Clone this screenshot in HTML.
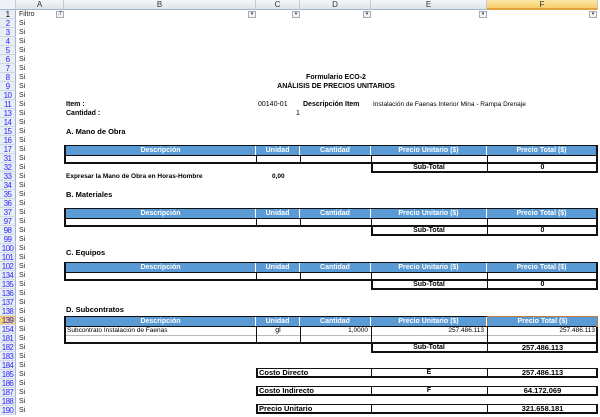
<!DOCTYPE html>
<html><head><meta charset="utf-8"><style>
*{margin:0;padding:0;box-sizing:border-box}
body{width:600px;height:417px;overflow:hidden;background:#fff;font-family:"Liberation Sans",Arial,sans-serif;font-size:7px;position:relative;color:#000}
div{position:absolute;white-space:nowrap}
.ch{top:0;height:10px;background:linear-gradient(#f4f6f9,#dfe4ea);border-right:1px solid #c5cbd3;border-bottom:1px solid #9eb6ce;text-align:center;font-size:8px;line-height:10px;color:#333}
.rn{left:0;width:16px;height:9px;background:#e9eef5;border-right:1px solid #9eb6ce;border-bottom:1px solid #d0d7e2;color:#2b2bff;font-size:8px;line-height:9px;text-align:center;letter-spacing:-0.6px}
.si{left:19px;height:9px;line-height:9px;font-size:7px;color:#222}
.b{font-weight:bold}
.hd{height:10px;background:#5b9bd5;color:#fff;font-weight:bold;text-align:center;line-height:10px;border-right:1px solid #fff}
.dd{width:8px;height:7px;top:11px;border:1px solid #aab;background:#f4f4f4;font-size:5px;line-height:5px;text-align:center;color:#333}
.bx{border:2px solid #111;border-top-width:1px;height:10px}
</style></head><body>
<div class="ch" style="left:0;width:16px;background:#eef1f5"></div>
<div class="ch" style="left:16px;width:48px">A</div>
<div class="ch" style="left:64px;width:192px">B</div>
<div class="ch" style="left:256px;width:44px">C</div>
<div class="ch" style="left:300px;width:71px">D</div>
<div class="ch" style="left:371px;width:116px">E</div>
<div class="ch" style="left:487px;width:111px;background:linear-gradient(#fbe6a6,#f6cf6a);border-bottom:2px solid #e2a13a">F</div>
<div class="dd" style="left:56px">.T</div>
<div class="dd" style="left:248px">▾</div>
<div class="dd" style="left:292px">▾</div>
<div class="dd" style="left:363px">▾</div>
<div class="dd" style="left:479px">▾</div>
<div class="dd" style="left:589px">▾</div>

<div class="rn" style="top:10px;color:#000">1</div><div class="si" style="top:10px">Filtro</div>
<div class="rn" style="top:19px">2</div><div class="si" style="top:19px">Si</div>
<div class="rn" style="top:28px">3</div><div class="si" style="top:28px">Si</div>
<div class="rn" style="top:37px">4</div><div class="si" style="top:37px">Si</div>
<div class="rn" style="top:46px">5</div><div class="si" style="top:46px">Si</div>
<div class="rn" style="top:55px">6</div><div class="si" style="top:55px">Si</div>
<div class="rn" style="top:64px">7</div><div class="si" style="top:64px">Si</div>
<div class="rn" style="top:73px">8</div><div class="si" style="top:73px">Si</div>
<div class="rn" style="top:82px">9</div><div class="si" style="top:82px">Si</div>
<div class="rn" style="top:91px">10</div><div class="si" style="top:91px">Si</div>
<div class="rn" style="top:100px">11</div><div class="si" style="top:100px">Si</div>
<div class="rn" style="top:109px">13</div><div class="si" style="top:109px">Si</div>
<div class="rn" style="top:118px">14</div><div class="si" style="top:118px">Si</div>
<div class="rn" style="top:127px">15</div><div class="si" style="top:127px">Si</div>
<div class="rn" style="top:136px">16</div><div class="si" style="top:136px">Si</div>
<div class="rn" style="top:145px">17</div><div class="si" style="top:145px">Si</div>
<div class="rn" style="top:154px">31</div><div class="si" style="top:154px">Si</div>
<div class="rn" style="top:163px">32</div><div class="si" style="top:163px">Si</div>
<div class="rn" style="top:172px">33</div><div class="si" style="top:172px">Si</div>
<div class="rn" style="top:181px">34</div><div class="si" style="top:181px">Si</div>
<div class="rn" style="top:190px">35</div><div class="si" style="top:190px">Si</div>
<div class="rn" style="top:199px">36</div><div class="si" style="top:199px">Si</div>
<div class="rn" style="top:208px">37</div><div class="si" style="top:208px">Si</div>
<div class="rn" style="top:217px">97</div><div class="si" style="top:217px">Si</div>
<div class="rn" style="top:226px">98</div><div class="si" style="top:226px">Si</div>
<div class="rn" style="top:235px">99</div><div class="si" style="top:235px">Si</div>
<div class="rn" style="top:244px">100</div><div class="si" style="top:244px">Si</div>
<div class="rn" style="top:253px">101</div><div class="si" style="top:253px">Si</div>
<div class="rn" style="top:262px">102</div><div class="si" style="top:262px">Si</div>
<div class="rn" style="top:271px">134</div><div class="si" style="top:271px">Si</div>
<div class="rn" style="top:280px">135</div><div class="si" style="top:280px">Si</div>
<div class="rn" style="top:289px">136</div><div class="si" style="top:289px">Si</div>
<div class="rn" style="top:298px">137</div><div class="si" style="top:298px">Si</div>
<div class="rn" style="top:307px">138</div><div class="si" style="top:307px">Si</div>
<div class="rn" style="top:316px;background:#f6cf6a;color:#2b2bff">139</div><div class="si" style="top:316px">Si</div>
<div class="rn" style="top:325px">154</div><div class="si" style="top:325px">Si</div>
<div class="rn" style="top:334px">181</div><div class="si" style="top:334px">Si</div>
<div class="rn" style="top:343px">182</div><div class="si" style="top:343px">Si</div>
<div class="rn" style="top:352px">183</div><div class="si" style="top:352px">Si</div>
<div class="rn" style="top:361px">184</div><div class="si" style="top:361px">Si</div>
<div class="rn" style="top:370px">185</div><div class="si" style="top:370px">Si</div>
<div class="rn" style="top:379px">186</div><div class="si" style="top:379px">Si</div>
<div class="rn" style="top:388px">187</div><div class="si" style="top:388px">Si</div>
<div class="rn" style="top:397px">188</div><div class="si" style="top:397px">Si</div>
<div class="rn" style="top:406px">190</div><div class="si" style="top:406px">Si</div>

<div class="b" style="left:256px;width:160px;top:73px;text-align:center;line-height:9px">Formulario ECO-2</div>
<div class="b" style="left:236px;width:200px;top:82px;text-align:center;line-height:9px">ANÁLISIS DE PRECIOS UNITARIOS</div>
<div class="b" style="left:66px;top:100px;line-height:9px">Item :</div>
<div style="left:258px;top:100px;line-height:9px">00140-01</div>
<div class="b" style="left:303px;top:100px;line-height:9px">Descripción Item</div>
<div style="left:373px;top:100px;line-height:9px;font-size:6.5px">Instalación de Faenas Interior Mina - Rampa Drenaje</div>
<div class="b" style="left:66px;top:109px;line-height:9px">Cantidad :</div>
<div style="left:296px;top:109px;line-height:9px">1</div>
<div class="b" style="left:66px;top:127px;line-height:9px;font-size:7.5px">A. Mano de Obra</div>
<div class="b" style="left:66px;top:172px;line-height:9px;font-size:6.5px">Expresar la Mano de Obra en Horas-Hombre</div>
<div class="b" style="left:272px;top:172px;line-height:9px;font-size:6.5px">0,00</div>
<div class="b" style="left:66px;top:190px;line-height:9px;font-size:7.5px">B. Materiales</div>
<div class="b" style="left:66px;top:248px;line-height:9px;font-size:7.5px">C. Equipos</div>
<div class="b" style="left:66px;top:305px;line-height:9px;font-size:7.5px">D. Subcontratos</div>

<div style="left:64px;top:145px;width:534px;height:19px;border:2px solid #111"></div>
<div style="left:64px;top:208px;width:534px;height:19px;border:2px solid #111"></div>
<div style="left:64px;top:262px;width:534px;height:19px;border:2px solid #111"></div>
<div style="left:64px;top:316px;width:534px;height:28px;border:2px solid #111"></div>

<div class="hd" style="left:66px;top:146px;width:190px">Descripción</div><div class="hd" style="left:256px;top:146px;width:44px">Unidad</div><div class="hd" style="left:300px;top:146px;width:71px">Cantidad</div><div class="hd" style="left:371px;top:146px;width:116px">Precio Unitario ($)</div><div class="hd" style="left:487px;top:146px;width:109px;border:0">Precio Total ($)</div>
<div class="hd" style="left:66px;top:209px;width:190px">Descripción</div><div class="hd" style="left:256px;top:209px;width:44px">Unidad</div><div class="hd" style="left:300px;top:209px;width:71px">Cantidad</div><div class="hd" style="left:371px;top:209px;width:116px">Precio Unitario ($)</div><div class="hd" style="left:487px;top:209px;width:109px;border:0">Precio Total ($)</div>
<div class="hd" style="left:66px;top:263px;width:190px">Descripción</div><div class="hd" style="left:256px;top:263px;width:44px">Unidad</div><div class="hd" style="left:300px;top:263px;width:71px">Cantidad</div><div class="hd" style="left:371px;top:263px;width:116px">Precio Unitario ($)</div><div class="hd" style="left:487px;top:263px;width:109px;border:0">Precio Total ($)</div>
<div class="hd" style="left:66px;top:317px;width:190px">Descripción</div><div class="hd" style="left:256px;top:317px;width:44px">Unidad</div><div class="hd" style="left:300px;top:317px;width:71px">Cantidad</div><div class="hd" style="left:371px;top:317px;width:116px">Precio Unitario ($)</div><div class="hd" style="left:487px;top:316px;width:111px;height:11px;border:1px solid #c07a40">Precio Total ($)</div>

<div style="left:66px;top:155px;width:530px;height:1px;background:#111"></div>
<div style="left:66px;top:218px;width:530px;height:1px;background:#111"></div>
<div style="left:66px;top:272px;width:530px;height:1px;background:#111"></div>
<div style="left:66px;top:326px;width:530px;height:1px;background:#111"></div>
<div style="left:66px;top:335px;width:530px;height:1px;background:#bbb"></div>
<div style="left:256px;top:155px;width:1px;height:7px;background:#111"></div><div style="left:300px;top:155px;width:1px;height:7px;background:#111"></div><div style="left:371px;top:155px;width:1px;height:7px;background:#111"></div><div style="left:487px;top:155px;width:1px;height:7px;background:#111"></div>
<div style="left:256px;top:218px;width:1px;height:7px;background:#111"></div><div style="left:300px;top:218px;width:1px;height:7px;background:#111"></div><div style="left:371px;top:218px;width:1px;height:7px;background:#111"></div><div style="left:487px;top:218px;width:1px;height:7px;background:#111"></div>
<div style="left:256px;top:272px;width:1px;height:7px;background:#111"></div><div style="left:300px;top:272px;width:1px;height:7px;background:#111"></div><div style="left:371px;top:272px;width:1px;height:7px;background:#111"></div><div style="left:487px;top:272px;width:1px;height:7px;background:#111"></div>
<div style="left:256px;top:326px;width:1px;height:16px;background:#111"></div><div style="left:300px;top:326px;width:1px;height:16px;background:#111"></div><div style="left:371px;top:326px;width:1px;height:16px;background:#111"></div><div style="left:487px;top:326px;width:1px;height:16px;background:#111"></div>

<div style="left:67px;top:326px;line-height:9px;font-size:6.5px">Subcontrato Instalación de Faenas</div>
<div style="left:256px;width:44px;top:326px;line-height:9px;text-align:center">gl</div>
<div style="left:300px;width:68px;top:326px;line-height:9px;text-align:right;font-size:6.5px">1,0000</div>
<div style="left:371px;width:113px;top:326px;line-height:9px;text-align:right;font-size:6.5px">257.486.113</div>
<div style="left:487px;width:108px;top:326px;line-height:9px;text-align:right;font-size:6.5px">257.486.113</div>

<div class="bx" style="left:371px;top:163px;width:227px"></div><div style="left:487px;top:164px;width:1px;height:8px;background:#111"></div>
<div class="b" style="left:371px;width:116px;top:163px;line-height:10px;text-align:center">Sub-Total</div><div class="b" style="left:487px;width:111px;top:163px;line-height:10px;text-align:center">0</div>
<div class="bx" style="left:371px;top:226px;width:227px"></div><div style="left:487px;top:227px;width:1px;height:8px;background:#111"></div>
<div class="b" style="left:371px;width:116px;top:226px;line-height:10px;text-align:center">Sub-Total</div><div class="b" style="left:487px;width:111px;top:226px;line-height:10px;text-align:center">0</div>
<div class="bx" style="left:371px;top:280px;width:227px"></div><div style="left:487px;top:281px;width:1px;height:8px;background:#111"></div>
<div class="b" style="left:371px;width:116px;top:280px;line-height:10px;text-align:center">Sub-Total</div><div class="b" style="left:487px;width:111px;top:280px;line-height:10px;text-align:center">0</div>
<div class="bx" style="left:371px;top:343px;width:227px"></div><div style="left:487px;top:344px;width:1px;height:8px;background:#111"></div>
<div class="b" style="left:371px;width:116px;top:343px;line-height:10px;text-align:center">Sub-Total</div><div class="b" style="left:487px;width:111px;top:343px;line-height:10px;text-align:center;font-size:7.5px">257.486.113</div>

<div class="bx" style="left:256px;top:368px;width:342px"></div><div style="left:371px;top:369px;width:1px;height:8px;background:#111"></div><div style="left:487px;top:369px;width:1px;height:8px;background:#111"></div>
<div class="b" style="left:259px;top:368px;line-height:10px;font-size:7.5px;text-decoration:underline">Costo Directo</div><div class="b" style="left:371px;width:116px;top:368px;line-height:10px;text-align:center">E</div><div class="b" style="left:487px;width:111px;top:368px;line-height:10px;text-align:center;font-size:7.5px;text-decoration:underline">257.486.113</div>
<div class="bx" style="left:256px;top:386px;width:342px"></div><div style="left:371px;top:387px;width:1px;height:8px;background:#111"></div><div style="left:487px;top:387px;width:1px;height:8px;background:#111"></div>
<div class="b" style="left:259px;top:386px;line-height:10px;font-size:7.5px;text-decoration:underline">Costo Indirecto</div><div class="b" style="left:371px;width:116px;top:386px;line-height:10px;text-align:center">F</div><div class="b" style="left:487px;width:111px;top:386px;line-height:10px;text-align:center;font-size:7.5px;text-decoration:underline">64.172.069</div>
<div class="bx" style="left:256px;top:404px;width:342px"></div><div style="left:371px;top:405px;width:1px;height:8px;background:#111"></div><div style="left:487px;top:405px;width:1px;height:8px;background:#111"></div>
<div class="b" style="left:259px;top:404px;line-height:10px;font-size:7.5px;text-decoration:underline">Precio Unitario</div><div class="b" style="left:487px;width:111px;top:404px;line-height:10px;text-align:center;font-size:7.5px;text-decoration:underline">321.658.181</div>
</body></html>
